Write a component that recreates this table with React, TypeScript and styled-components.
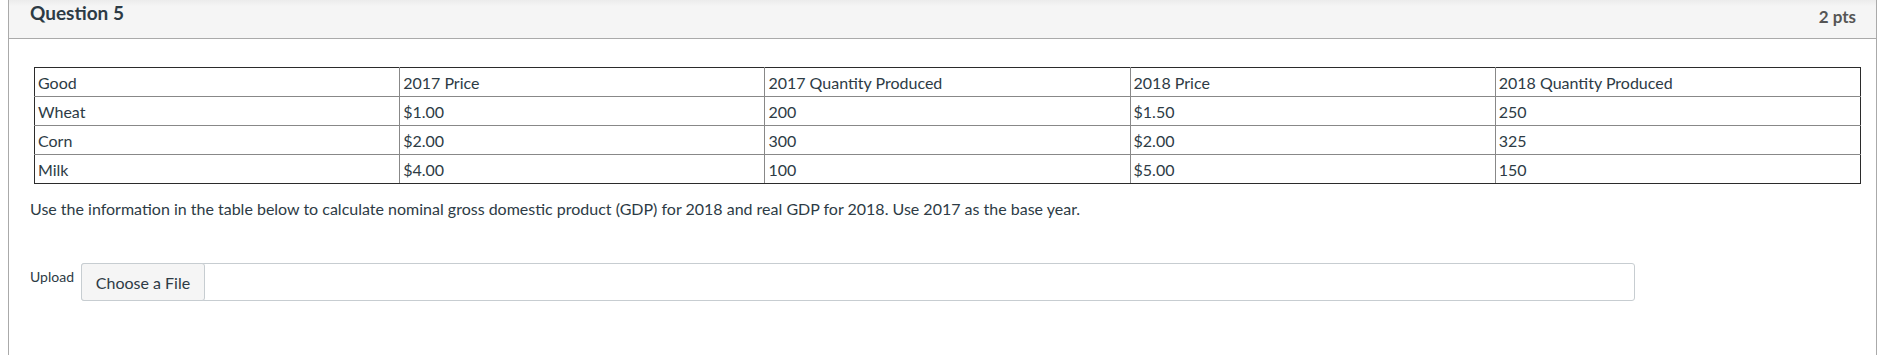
import React from 'react';
import styled, { createGlobalStyle } from 'styled-components';

const GlobalStyle = createGlobalStyle`
  body {
    margin: 0;
    background: #fff;
    font-family: Lato, "Open Sans", sans-serif;
    color: #2d3b45;
  }
`;

const rows = [
  ['Good', '2017 Price', '2017 Quantity Produced', '2018 Price', '2018 Quantity Produced'],
  ['Wheat', '$1.00', '200', '$1.50', '250'],
  ['Corn', '$2.00', '300', '$2.00', '325'],
  ['Milk', '$4.00', '100', '$5.00', '150'],
];

const App = () => {
  return (
    <>
      <GlobalStyle />
      <Panel>
        <Header>
          <Title>Question 5</Title>
          <Points>2 pts</Points>
        </Header>
        <Body>
          <DataTable>
            <tbody>
              {rows.map((row, r) => (
                <tr key={r}>
                  {row.map((cell, c) => (
                    <Cell key={c}>{cell}</Cell>
                  ))}
                </tr>
              ))}
            </tbody>
          </DataTable>
          <Prompt>
            Use the information in the table below to calculate nominal gross domestic product (GDP) for 2018 and real GDP for 2018. Use 2017 as the base year.
          </Prompt>
          <UploadRow>
            <UploadLabel>Upload</UploadLabel>
            <FileField>
              <ChooseButton type="button">Choose a File</ChooseButton>
            </FileField>
          </UploadRow>
        </Body>
      </Panel>
    </>
  );
};

export default App;

const Panel = styled.div`
  margin-left: 8px;
  width: 1869px;
  height: 355px;
  box-sizing: border-box;
  border-left: 1px solid #aaa;
  border-right: 1px solid #aaa;
  background: #fff;
`;

const Header = styled.div`
  height: 39px;
  box-sizing: border-box;
  display: flex;
  justify-content: space-between;
  align-items: flex-start;
  padding: 2px 20px 0 21px;
  background: linear-gradient(#ececec 0, #f5f5f5 6px);
  border-bottom: 1px solid #aaa;
`;

const Title = styled.div`
  font-size: 19px;
  line-height: 22px;
  font-weight: 700;
  color: #2d3b45;
`;

const Points = styled.div`
  margin-top: 5px;
  font-size: 17px;
  line-height: 20px;
  font-weight: 700;
  color: #555;
`;

const Body = styled.div`
  padding: 28px 0 0 21px;
`;

const DataTable = styled.table`
  margin-left: 4px;
  border-collapse: collapse;
  table-layout: fixed;
  width: 1827px;

  tr:first-child td {
    border-top-color: #2b2b2b;
  }
  tr:last-child td {
    border-bottom-color: #2b2b2b;
  }
  td:first-child {
    border-left-color: #2b2b2b;
  }
  td:last-child {
    border-right-color: #2b2b2b;
  }
`;

const Cell = styled.td`
  height: 29px;
  box-sizing: border-box;
  padding: 2px 3px 0;
  border: 1px solid #888;
  font-size: 16px;
  line-height: 20px;
  vertical-align: middle;
  color: #2d3b45;
  white-space: nowrap;
`;

const Prompt = styled.p`
  margin: 14px 0 0;
  font-size: 16px;
  line-height: 22px;
  color: #2d3b45;
`;

const UploadRow = styled.div`
  display: flex;
  align-items: flex-start;
  gap: 7px;
  margin-top: 43px;
`;

const UploadLabel = styled.span`
  padding-top: 5px;
  font-size: 14px;
  line-height: 18px;
  color: #2d3b45;
`;

const FileField = styled.div`
  width: 1554px;
  height: 38px;
  box-sizing: border-box;
  border: 1px solid #c7cdd1;
  border-radius: 3px;
  display: flex;
  background: #fff;
`;

const ChooseButton = styled.button`
  margin: -1px 0 0 -1px;
  width: 124px;
  height: 38px;
  box-sizing: border-box;
  border: 1px solid #c7cdd1;
  border-radius: 3px;
  background: #f5f5f5;
  font-family: Lato, "Open Sans", sans-serif;
  font-size: 16px;
  color: #2d3b45;
  padding: 0;
`;
